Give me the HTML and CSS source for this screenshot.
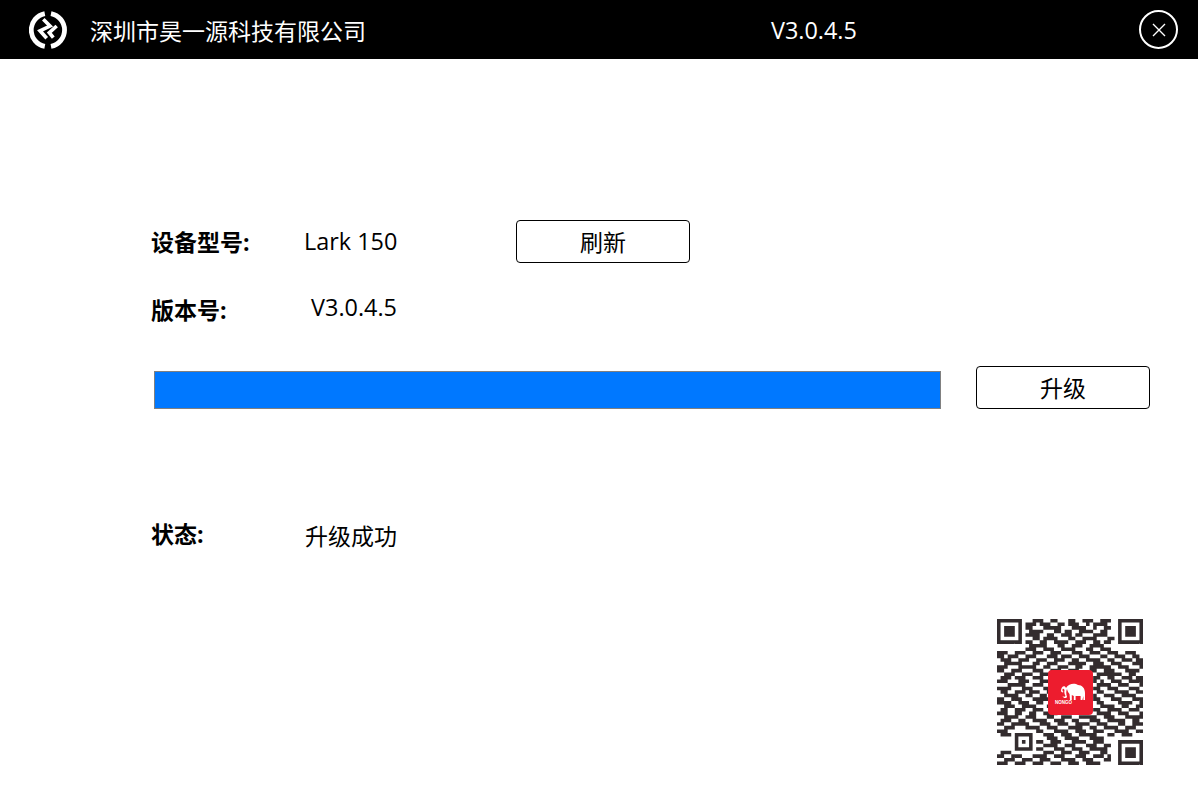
FILE: index.html
```html
<!DOCTYPE html>
<html lang="zh-CN">
<head>
  <meta charset="UTF-8">
  <title>深圳市昊一源科技有限公司</title>
  <link rel="stylesheet" href="styles.css">
</head>
<body>
  <!-- Title bar -->
  <header class="title-bar">
    <div class="brand">
      <svg class="brand-logo" width="38" height="38" viewBox="0 0 38 38" fill="none" stroke="#fff">
        <path d="M15.800 2.600A16.700 16.700 0 0 0 15.800 35.400" stroke-width="4.800"/>
        <path d="M22 2.600A16.700 16.700 0 0 1 22 35.400" stroke-width="4.800"/>
        <path d="M14.300 8.300L21 15L11 19.800L17.700 27.300" stroke-width="3.600"/>
        <path d="M27.700 15L20.300 21.700L24.300 26.700" stroke-width="3.600"/>
      </svg>
      <span class="brand-name">深圳市昊一源科技有限公司</span>
    </div>
    <span class="app-version">V3.0.4.5</span>
    <button class="close-btn" type="button" aria-label="关闭">
      <svg width="14" height="14" viewBox="0 0 14 14" stroke="#fff" stroke-width="1.4">
        <path d="M1 1L13 13M13 1L1 13"/>
      </svg>
    </button>
  </header>

  <main class="panel">
    <div class="info-row row-model">
      <span class="info-label">设备型号:</span>
      <span class="info-value">Lark 150</span>
      <button class="outline-btn refresh-btn" type="button">刷新</button>
    </div>
    <div class="info-row row-version">
      <span class="info-label">版本号:</span>
      <span class="info-value">V3.0.4.5</span>
    </div>
    <div class="upgrade-row">
      <div class="progress"><div class="progress-fill"></div></div>
      <button class="outline-btn" type="button">升级</button>
    </div>
    <div class="info-row row-status">
      <span class="info-label">状态:</span>
      <span class="info-value">升级成功</span>
    </div>
    <div class="qr-wrap">
      <svg class="qr" width="146" height="147" viewBox="0 0 146 147">
        <path id="qrModules" fill="#332c2e"></path>
        <rect x="51" y="51" width="45" height="45" rx="4" fill="#ed1c2e"/>
        <path transform="translate(3 -1)" d="M61 73c0-5 4-6 5-3c3-5 9-5 12-3c4 0 7 3 7 8v7h-1.600v-4l-1 4h-1.800v-4h-5v4h-1.800v-4l-2-1v5h-1.800l-.500-6c-1-1-2-3-2.500-5c-1 2-1 5 0 8c-1 2-4 1-4.500-1c1 1 2.500 1 3 0c-1-2-1.500-4-1-6c-1-2-2-1.500-2 0c0 1 .5 1.500 1 2l-1 .5c-1-.5-1.500-1-1.500-2z" fill="#fff"/>
        <text class="qr-mark" x="58" y="85">NONGO</text>
      </svg>
    </div>
  </main>
  <script src="qr.js"></script>
</body>
</html>
```

FILE: styles.css
```css
:root {
  --text-color: #000;
  --bar-color: #000;
  --progress-color: #0078ff;
  --cjk-font: "Open Sans", "Noto Sans CJK SC", sans-serif;
}
html, body {
  margin: 0;
  height: 100%;
  overflow: hidden;
}
body {
  background-color: #fff;
  color: var(--text-color);
  font-family: var(--cjk-font);
}
.title-bar {
  position: relative;
  display: flex;
  align-items: center;
  justify-content: space-between;
  height: 59px;
  padding: 0 20px 0 29px;
  background-color: var(--bar-color);
  color: #fff;
}
.brand {
  display: flex;
  align-items: center;
  gap: 23px;
}
.brand-logo {
  display: block;
}
.brand-name {
  font-size: 23px;
}
.app-version {
  position: absolute;
  left: 771px;
  top: 13px;
  font-size: 23.4px;
  line-height: 34px;
}
.close-btn {
  display: flex;
  align-items: center;
  justify-content: center;
  width: 39px;
  height: 39px;
  padding: 0;
  background: none;
  border: 2px solid #fff;
  border-radius: 50%;
}
.panel {
  padding: 161px 48px 0 151px;
}
.info-row {
  display: flex;
  align-items: center;
}
.info-label {
  width: 153px;
  font-size: 23px;
  font-weight: 700;
}
.info-value {
  width: 93px;
  font-size: 23.4px;
  text-align: right;
  white-space: nowrap;
}
.row-model {
  height: 43px;
}
.row-model .info-label {
  padding-bottom: 2px;
}
.row-model .info-value {
  padding-bottom: 2px;
}
.row-version {
  height: 40px;
  margin-top: 26px;
}
.row-version .info-value {
  padding-bottom: 4px;
}
.refresh-btn {
  margin-left: 119px;
}
.outline-btn {
  width: 174px;
  height: 43px;
  padding: 0 0 2px;
  background-color: #fff;
  border: 1px solid #000;
  border-radius: 4px;
  color: var(--text-color);
  font-family: var(--cjk-font);
  font-size: 23px;
}
.upgrade-row {
  display: flex;
  align-items: flex-end;
  gap: 35px;
  margin-top: 37px;
  padding-left: 3px;
}
.progress {
  width: 787px;
  height: 38px;
  box-sizing: border-box;
  border: 1px solid #808080;
}
.progress-fill {
  height: 100%;
  background-color: var(--progress-color);
}
.row-status {
  height: 40px;
  margin-top: 106px;
}
.row-status .info-label {
  padding-bottom: 4px;
}
.row-status .info-value {
  padding-right: 1px;
  font-size: 23px;
}
.qr-wrap {
  display: flex;
  justify-content: flex-end;
  margin-top: 64px;
  padding-right: 7px;
}
.qr {
  display: block;
}
.qr-mark {
  font-family: "Liberation Sans", sans-serif;
  font-size: 4.5px;
  font-weight: 700;
  fill: #fff;
}
```

FILE: qr.js
```js
// QR modules, 41 x 41. Finders and the small square are stamped on afterwards.
const rows = [
  '00000000001110011000110011100111000000000',
  '00000000111011100110111001011110000000000',
  '00000000110001111100011110010011000000000',
  '00000000011110001101100111100110000000000',
  '00000000111100110011101100011110000000000',
  '00000000001101111000110011110001100000000',
  '00000000110011001111001110011011000000000',
  '00000000011111000110011100111100000000000',
  '00000000111001110011110001100111000000000',
  '11100111001110011100011100111001110011100',
  '11011100111000111011100111000110011100110',
  '01110011100111001110011001111001100111011',
  '00111110001100111000111110011100111000111',
  '11100011111001100111001100111111001110001',
  '11001110001110011100111000110011100011110',
  '00111001110011111000000000001111111001100',
  '01110111001110001000000000011001100111011',
  '11100011100011100000000000010100111001111',
  '00011111001110011000000000001111001110001',
  '11110001110001110000000000011001110001110',
  '01100111011100111000000000001100011110011',
  '00111100110011000000000000010011100111100',
  '11001110001111100000000000011000111000111',
  '11110011100110011000000000001100001111001',
  '00111001111000111000000000000111100110011',
  '01100111001110001000000000011001111001110',
  '11100110011001111000000000001111001110001',
  '00111100111000110011100111110011100011111',
  '01110011001111001110011000111001111100110',
  '11001111100011100111001111001110001100111',
  '00111000111100111000111100110011110011100',
  '11100111001110001111001110011100011110011',
  '01111100011001110011100111110001100111000',
  '00000000111000111001111000111100000000000',
  '00000000001110011100011110011100000000000',
  '00000000111001111001110001110011000000000',
  '00000000011110001110011100111110000000000',
  '01110000111001110011100111000110000000000',
  '11001110001111001110001110011101000000000',
  '00111001110011100011110011100011000000000',
  '11100111001110011100111001111000000000000'
];

const grid = rows.map(row => row.split('').map(Number));

// stamp a square ring pattern with its top-left corner at x, y
function stamp(x, y, size) {
  for (let j = -1; j <= size; j++) {
    for (let i = -1; i <= size; i++) {
      if (!grid[y + j] || grid[y + j][x + i] === undefined) continue;
      const outer = i === 0 || j === 0 || i === size - 1 || j === size - 1;
      const inside = i >= 0 && j >= 0 && i < size && j < size;
      const core = size === 7
        ? i >= 2 && j >= 2 && i <= 4 && j <= 4
        : i === 2 && j === 2;
      grid[y + j][x + i] = inside && (outer || core) ? 1 : 0;
    }
  }
}

stamp(0, 0, 7);
stamp(34, 0, 7);
stamp(34, 34, 7);
stamp(5, 32, 5);

const unit = 146 / 41;
let d = '';
grid.forEach((row, y) => {
  row.forEach((on, x) => {
    if (on) d += `M${(x * unit).toFixed(2)} ${(y * unit).toFixed(2)}h${unit.toFixed(2)}v${unit.toFixed(2)}h-${unit.toFixed(2)}z`;
  });
});
document.getElementById('qrModules').setAttribute('d', d);
```
